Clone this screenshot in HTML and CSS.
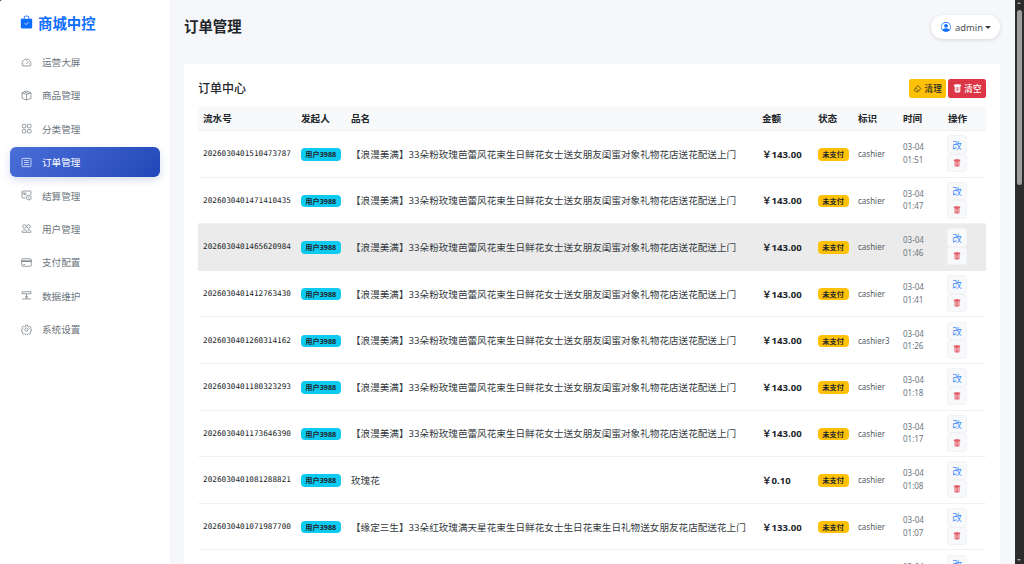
FILE: index.html
```html
<!DOCTYPE html>
<html lang="zh">
<head>
<meta charset="utf-8">
<title>订单管理</title>
<link rel="stylesheet" href="styles.css">
</head>
<body>
<div class="layout">
  <aside class="sidebar">
    <div class="brand">
      <svg class="brand-icon" viewBox="0 0 16 16"><path fill="#0d6efd" d="M8 1a2.5 2.5 0 0 1 2.5 2.5V4h-5v-.5A2.5 2.5 0 0 1 8 1m3.5 3v-.5a3.5 3.5 0 1 0-7 0V4H1v10a2 2 0 0 0 2 2h10a2 2 0 0 0 2-2V4z"/><path fill="none" stroke="#fff" stroke-width="1" d="M5.800 9.600 7.400 11.200 10.400 8.200"/></svg>
      <span>商城中控</span>
    </div>
    <nav class="nav">
      <a class="nav-item"><svg viewBox="0 0 16 16"><path d="M8 3a6.500 6.500 0 0 0-6.500 6.500c0 1.200.4 2.400 1 3.500h11c.6-1.100 1-2.300 1-3.500A6.500 6.500 0 0 0 8 3zM8 10l3-3.500M3.500 10h1.200M11.300 10h1.200M8 5v1.200"/></svg>运营大屏</a>
      <a class="nav-item"><svg viewBox="0 0 16 16"><path d="M8 1.500 14.500 4v8L8 14.500 1.500 12V4zM1.500 4 8 6.500 14.500 4M8 6.500v8M5 2.800l6.500 2.500"/></svg>商品管理</a>
      <a class="nav-item"><svg viewBox="0 0 16 16"><rect x="2" y="2" width="5" height="5" rx="1"/><rect x="9.500" y="2" width="5" height="5" rx="1"/><rect x="2" y="9.500" width="5" height="5" rx="1"/><rect x="9.500" y="9.500" width="5" height="5" rx="1"/></svg>分类管理</a>
      <a class="nav-item active"><svg viewBox="0 0 16 16"><rect x="1.500" y="2" width="13" height="12" rx="1"/><path d="M4.500 5h7M4.500 8h7M4.500 11h7"/></svg>订单管理</a>
      <a class="nav-item"><svg viewBox="0 0 16 16"><path d="M7 11.500H2.500a1 1 0 0 1-1-1v-8a1 1 0 0 1 1-1h11a1 1 0 0 1 1 1V7M1.500 4.500h3M6 7a1.500 1.500 0 1 0-.1 0"/><circle cx="11.500" cy="11" r="3.500"/><path d="M11.500 9.500v3"/></svg>结算管理</a>
      <a class="nav-item"><svg viewBox="0 0 16 16"><circle cx="5" cy="5" r="2.500"/><circle cx="11" cy="5" r="2.500"/><path d="M1.500 13.500c0-2 1.500-3.500 3.500-3.500s3 1.500 3 3.500zM8.500 10.500c.6-.400 1.500-.500 2.500-.500 2 0 3.500 1.500 3.500 3.500H8"/></svg>用户管理</a>
      <a class="nav-item"><svg viewBox="0 0 16 16"><rect x="1" y="2.500" width="14" height="11" rx="1.500"/><path d="M1 6h14" stroke-width="2"/><path d="M3 11h3"/></svg>支付配置</a>
      <a class="nav-item"><svg viewBox="0 0 16 16"><path d="M1.500 2.500h13v3h-13zM8 5.500v7.500M1.500 13h13M5.500 10h5"/></svg>数据维护</a>
      <a class="nav-item"><svg viewBox="0 0 16 16"><circle cx="8" cy="8" r="2.300"/><path d="M6.800 1.500h2.400l.4 1.800 1.300.6 1.600-1 1.700 1.700-1 1.600.6 1.300 1.800.4v2.200l-1.800.4-.6 1.300 1 1.600-1.700 1.700-1.600-1-1.300.6-.4 1.800H6.800l-.4-1.800-1.300-.6-1.600 1-1.700-1.700 1-1.600-.6-1.300-1.800-.4V7.900l1.800-.4.6-1.300-1-1.600 1.700-1.700 1.600 1 1.300-.6z"/></svg>系统设置</a>
    </nav>
  </aside>
  <main class="main">
    <header class="topbar">
      <h1 class="page-title">订单管理</h1>
      <button class="user-btn">
        <svg class="user-icon" viewBox="0 0 16 16"><path fill="#0d6efd" d="M11 6a3 3 0 1 1-6 0 3 3 0 0 1 6 0"/><path fill="#0d6efd" fill-rule="evenodd" d="M0 8a8 8 0 1 1 16 0A8 8 0 0 1 0 8m8-7a7 7 0 0 0-5.500 11.300C3.200 11.200 4.900 10 8 10s4.800 1.200 5.500 2.300A7 7 0 0 0 8 1"/></svg>
        <span class="user-name">admin</span><i class="caret"></i>
      </button>
    </header>
    <section class="card">
      <div class="card-head">
        <h2 class="card-title">订单中心</h2>
        <div class="card-actions">
          <button class="btn btn-warning"><svg viewBox="0 0 16 16"><path fill="none" stroke="currentColor" stroke-width="1.200" d="M8.500 2.500 14 8l-6 6H5.500L2 10.500zM5 7.500 10.500 13"/></svg>清理</button>
          <button class="btn btn-danger"><svg viewBox="0 0 16 16"><path fill="currentColor" d="M2.500 1a1 1 0 0 0-1 1v1a1 1 0 0 0 1 1H3v9a2 2 0 0 0 2 2h6a2 2 0 0 0 2-2V4h.5a1 1 0 0 0 1-1V2a1 1 0 0 0-1-1H10a1 1 0 0 0-1-1H7a1 1 0 0 0-1 1zm3 4a.5.500 0 0 1 .5.500v7a.5.500 0 0 1-1 0v-7a.5.500 0 0 1 .5-.500M8 5a.5.500 0 0 1 .5.500v7a.5.500 0 0 1-1 0v-7A.5.500 0 0 1 8 5m3 .500v7a.5.500 0 0 1-1 0v-7a.5.500 0 0 1 1 0"/></svg>清空</button>
        </div>
      </div>
      <table class="orders">
        <colgroup><col class="c-no"><col class="c-user"><col class="c-name"><col class="c-amt"><col class="c-st"><col class="c-tag"><col class="c-time"><col class="c-op"></colgroup>
        <thead><tr><th>流水号</th><th>发起人</th><th>品名</th><th>金额</th><th>状态</th><th>标识</th><th>时间</th><th>操作</th></tr></thead>
        <tbody id="rows"></tbody>
      </table>
    </section>
  </main>
</div>
<div class="scrollbar" aria-hidden="true"><i class="arrow-up"></i><b class="thumb"></b><i class="arrow-down"></i></div>
<script src="app.js"></script>
</body>
</html>
```
FILE: styles.css
```css
* { box-sizing: border-box; }
html { background: #2b2b2b; scrollbar-width: none; }
html::-webkit-scrollbar { display: none; }
html, body { margin: 0; padding: 0; }
body {
  font-family: "Noto Sans", "Noto Sans CJK SC", sans-serif;
  font-size: 9.600px;
  color: #212529;
}
.layout { display: flex; align-items: flex-start; min-height: 1750px; background: #f5f7fb; border-top-left-radius: 3px; overflow: clip; }
.sidebar {
  width: 170px;
  flex: none;
  height: 564px;
  position: sticky;
  top: 0;
  background: #fff;
  padding: 12px 10px 0;
}
.brand {
  display: flex;
  align-items: center;
  gap: 5px;
  height: 20px;
  padding-left: 10px;
  font-size: 14.400px;
  font-weight: 700;
  color: #0d6efd;
}
.brand-icon { width: 13px; height: 14px; }
.nav { display: flex; flex-direction: column; gap: 3.400px; margin-top: 15px; }
.nav-item {
  display: flex;
  align-items: center;
  gap: 10px;
  height: 30px;
  padding-left: 11px;
  border-radius: 6px;
  color: #6c757d;
  font-size: 9.600px;
}
.nav-item svg { width: 11px; height: 11px; fill: none; stroke: currentColor; stroke-width: 1; }
.nav-item.active {
  color: #fff;
  background: linear-gradient(135deg, #4a6fd8, #2347b8);
  box-shadow: 0 3px 8px rgba(35, 71, 184, .18);
}
.main { flex: 1; min-width: 0; padding: 14px 24px 0 14px; }
.topbar { display: flex; align-items: center; justify-content: space-between; height: 26px; margin-bottom: 24px; }
.page-title { margin: 0 0 3px; font-size: 14.400px; font-weight: 700; color: #212529; }
.user-btn {
  display: flex;
  align-items: center;
  height: 24px;
  padding: 0 9px 0 10px;
  border: 0;
  border-radius: 12px;
  background: #fff;
  box-shadow: 0 1px 4px rgba(0, 0, 0, .12);
  font: inherit;
  font-size: 9.400px;
  color: #495057;
}
.user-icon { width: 10px; height: 10px; }
.user-name { margin: 0 2px 0 4px; }
.caret { width: 0; height: 0; border: 3px solid transparent; border-top-color: #343a40; border-bottom: 0; }
.card { background: #fff; border-radius: 4px; padding: 14px; }
.card-head { display: flex; align-items: center; justify-content: space-between; height: 20px; margin-bottom: 8px; }
.card-title { margin: 0; font-size: 12px; font-weight: 500; color: #212529; }
.card-actions { display: flex; gap: 2px; }
.btn {
  display: flex;
  align-items: center;
  gap: 2.500px;
  height: 19px;
  padding: 0 4.500px;
  border: 0;
  border-radius: 2.500px;
  font: inherit;
  font-size: 8.600px;
  font-weight: 500;
}
.btn svg { width: 9px; height: 9px; }
.btn-warning { background: #ffc107; color: #212529; }
.btn-danger { background: #dc3545; color: #fff; }
.orders { width: 100%; table-layout: fixed; border-collapse: collapse; }
.c-no { width: 98px; } .c-user { width: 50px; } .c-name { width: 411px; } .c-amt { width: 56px; }
.c-st { width: 40px; } .c-tag { width: 45px; } .c-time { width: 45px; } .c-op { width: 43px; }
.orders th {
  height: 24.500px;
  padding: 0 5px;
  text-align: left;
  font-size: 9.600px;
  font-weight: 700;
  background: #f8f9fa;
  border-bottom: 1px solid #eef0f3;
}
.orders td {
  height: 46.600px;
  padding: 0 5px;
  border-bottom: 1px solid #f1f2f5;
  font-size: 9.600px;
  color: #343a40;
  white-space: nowrap;
}
.orders tr.hover td { background: #ebebeb; border-bottom-color: #ebebeb; }
.orders td.no { font-family: "DejaVu Sans Mono", "Liberation Mono", monospace; font-size: 7.700px; color: #212529; }
.badge { display: inline-block; padding: 0 4.800px; height: 12.500px; line-height: 12.500px; border-radius: 4px; font-size: 7.200px; font-weight: 700; color: #212529; vertical-align: middle; }
.badge-user { background: #0dcaf0; margin-left: -.5px; }
.badge-wait { background: #ffc107; margin-left: -.5px; }
.orders td.amt { font-weight: 700; color: #212529; }
.orders td.tag { font-size: 8px; color: #555c63; }
.orders td.time { font-size: 8px; line-height: 12.500px; color: #6c757d; white-space: pre-line; }
.ops { display: flex; flex-direction: column; width: 20px; margin-left: -1px; }
.op {
  display: flex;
  align-items: center;
  justify-content: center;
  width: 20px;
  height: 18.500px;
  border: 1px solid #f1f3f7;
  border-radius: 3px;
  background: #f8f9fb;
  padding: 0;
  font: inherit;
  font-size: 9.600px;
  color: #3d8bfd;
}
.op-del { color: #e35d6a; }
.op svg { width: 8px; height: 8px; }
.scrollbar {
  position: fixed;
  top: 0;
  right: 0;
  bottom: 0;
  width: 9px;
  background: #2c2c2c;
}
.thumb { position: absolute; top: 10px; left: 2px; right: 2px; height: 175px; background: #9f9f9f; border-radius: 3px; }
.arrow-up, .arrow-down { position: absolute; left: 2px; width: 0; height: 0; border: 2.500px solid transparent; }
.arrow-up { top: 2px; border-bottom-color: #a8a8a8; border-top: 0; }
.arrow-down { bottom: 3px; border-top-color: #a8a8a8; border-bottom: 0; }
```
FILE: app.js
```js
const A = "【浪漫美满】33朵粉玫瑰芭蕾风花束生日鲜花女士送女朋友闺蜜对象礼物花店送花配送上门";
const B = "【缘定三生】33朵红玫瑰满天星花束生日鲜花女士生日花束生日礼物送女朋友花店配送花上门";
const data = [
  ["2026030401510473787", A, "143.00", "cashier", "01:51"],
  ["2026030401471410435", A, "143.00", "cashier", "01:47"],
  ["2026030401465620984", A, "143.00", "cashier", "01:46"],
  ["2026030401412763430", A, "143.00", "cashier", "01:41"],
  ["2026030401260314162", A, "143.00", "cashier3", "01:26"],
  ["2026030401180323293", A, "143.00", "cashier", "01:18"],
  ["2026030401173646390", A, "143.00", "cashier", "01:17"],
  ["2026030401081288821", "玫瑰花", "0.10", "cashier", "01:08"],
  ["2026030401071987700", B, "133.00", "cashier", "01:07"],
  ["2026030401065512876", A, "143.00", "cashier", "01:06"]
];
const trash = '<svg viewBox="0 0 16 16"><path fill="currentColor" d="M2.500 1a1 1 0 0 0-1 1v1a1 1 0 0 0 1 1H3v9a2 2 0 0 0 2 2h6a2 2 0 0 0 2-2V4h.5a1 1 0 0 0 1-1V2a1 1 0 0 0-1-1H10a1 1 0 0 0-1-1H7a1 1 0 0 0-1 1zm3 4a.5.500 0 0 1 .5.500v7a.5.500 0 0 1-1 0v-7a.5.500 0 0 1 .5-.500M8 5a.5.500 0 0 1 .5.500v7a.5.500 0 0 1-1 0v-7A.5.500 0 0 1 8 5m3 .500v7a.5.500 0 0 1-1 0v-7a.5.500 0 0 1 1 0"/></svg>';
document.getElementById("rows").innerHTML = data.map((r, i) => `<tr class="${i === 2 ? "hover" : ""}">
<td class="no">${r[0]}</td>
<td><span class="badge badge-user">用户3988</span></td>
<td>${r[1]}</td>
<td class="amt">￥${r[2]}</td>
<td><span class="badge badge-wait">未支付</span></td>
<td class="tag">${r[3]}</td>
<td class="time">03-04
${r[4]}</td>
<td><div class="ops"><button class="op">改</button><button class="op op-del">${trash}</button></div></td>
</tr>`).join("");
```
